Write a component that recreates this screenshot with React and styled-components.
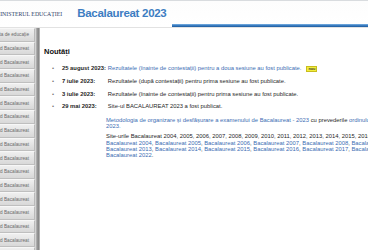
import React from "react"
import styled, { createGlobalStyle } from "styled-components"

const menu = [
  "Oferta de educație",
  "Ghid Bacalaureat",
  "Ghid Bacalaureat",
  "Ghid Bacalaureat",
  "Ghid Bacalaureat",
  "Ghid Bacalaureat",
  "Ghid Bacalaureat",
  "Ghid Bacalaureat",
  "Ghid Bacalaureat",
  "Ghid Bacalaureat",
  "Ghid Bacalaureat",
  "Ghid Bacalaureat",
  "Ghid Bacalaureat",
  "Ghid Bacalaureat",
  "Ghid Bacalaureat",
  "Ghid Bacalaureat",
  "Ghid Bacalaureat",
]

const news = [
  {
    date: "25 august 2023:",
    text: "Rezultatele (înainte de contestații) pentru a doua sesiune au fost publicate.",
    link: true,
    fresh: true,
  },
  {
    date: "7 iulie 2023:",
    text: "Rezultatele (după contestații) pentru prima sesiune au fost publicate.",
  },
  {
    date: "3 iulie 2023:",
    text: "Rezultatele (înainte de contestații) pentru prima sesiune au fost publicate.",
  },
  {
    date: "29 mai 2023:",
    text: "Site-ul BACALAUREAT 2023 a fost publicat.",
  },
]

const years = [2004, 2005, 2006, 2007, 2008, 2009, 2010, 2011, 2012, 2013, 2014, 2015, 2016, 2017, 2018, 2019, 2020, 2021, 2022]

const GlobalStyle = createGlobalStyle`
  html, body {
    margin: 0;
    padding: 0;
    background: #fff;
    overflow: hidden;
  }
  body {
    font-family: "Liberation Sans", Arial, sans-serif;
  }
`

const Page = styled.div`
  width: 640px;
  height: 250px;
  display: flex;
  flex-direction: column;
`

const Header = styled.header`
  height: 26px;
  flex: none;
  border-top: 1px solid #d9dcdf;
  display: flex;
  align-items: stretch;
  background: linear-gradient(#fdfdfd, #fff);
`

const Ministry = styled.div`
  margin-left: -5px;
  padding-top: 10px;
  font-family: "Liberation Serif", "Times New Roman", serif;
  font-size: 5.8px;
  color: #2d4168;
  white-space: nowrap;
`

const Title = styled.h1`
  margin: 0 0 0 15px;
  padding-top: 6px;
  font-size: 11.5px;
  font-weight: bold;
  letter-spacing: -0.3px;
  color: #3d7dc2;
  white-space: nowrap;
`

const Rule = styled.div`
  flex: 1;
  align-self: flex-end;
  margin-left: 6px;
  height: 3px;
  background: linear-gradient(#7db3e3, #3a7cc0 50%, #1d5a9c);
`

const Body = styled.div`
  flex: 1;
  display: flex;
  border-top: 1px solid #e2e2e2;
`

const Sidebar = styled.nav`
  width: 40px;
  flex: none;
  display: flex;
`

const Menu = styled.ul`
  margin: 0;
  padding: 0;
  list-style: none;
  width: 35px;
  background: #e4e4e4;
  overflow: hidden;
`

const MenuItem = styled.li`
  box-sizing: border-box;
  height: 13.7px;
  display: flex;
  align-items: center;
  justify-content: flex-end;
  padding-right: 5px;
  overflow: hidden;
  white-space: nowrap;
  font-size: 4.7px;
  color: #6b6b6b;
  background: linear-gradient(#efefef, #d8d8d8);
  border-top: 1px solid #f7f7f7;
  border-bottom: 1px solid #bfbfbf;
  border-right: 1px solid #b9b9b9;
`

const Bar = styled.div`
  width: 5px;
  background: linear-gradient(90deg, #e6e6e6, #9a9a9a 40%, #8a8a8a 70%, #c4c4c4);
`

const Main = styled.main`
  flex: 1;
  padding: 19px 0 0 4px;
  font-size: 5.85px;
  color: #1f1f1f;
`

const Heading = styled.h2`
  margin: 0 0 9px;
  font-size: 7.5px;
  font-weight: bold;
  color: #111;
`

const NewsList = styled.ul`
  margin: 0;
  padding: 0;
  list-style: none;
  display: grid;
  grid-template-columns: 17px auto 1fr;
  column-gap: 1px;
  row-gap: 6.3px;
`

const Row = styled.li`
  display: contents;
`

const Bullet = styled.span`
  padding-left: 8px;
  color: #777;
`

const Date = styled.span`
  font-weight: bold;
  white-space: nowrap;
  padding-right: 1px;
`

const Text = styled.span`
  white-space: nowrap;
  color: ${p => (p.$link ? "#3c6db3" : "#1f1f1f")};
`

const Badge = styled.span`
  display: inline-block;
  margin-left: 5px;
  padding: 0 1px;
  font-size: 3.8px;
  font-weight: bold;
  line-height: 4.5px;
  color: #333;
  background: #f3ef3c;
  border: 0.5px solid #c9bd1e;
  vertical-align: 0.5px;
`

const Block = styled.p`
  margin: ${p => p.$top}px 0 0 62px;
  width: 470px;
  line-height: 6.2px;
`

const Link = styled.a`
  color: #3c6db3;
  text-decoration: none;
`

export default function App() {
  return (
    <Page>
      <GlobalStyle />
      <Header>
        <Ministry>MINISTERUL EDUCAȚIEI</Ministry>
        <Title>Bacalaureat 2023</Title>
        <Rule />
      </Header>
      <Body>
        <Sidebar>
          <Menu>
            {menu.map((m, i) => (
              <MenuItem key={i}>{m}</MenuItem>
            ))}
          </Menu>
          <Bar />
        </Sidebar>
        <Main>
          <Heading>Noutăți</Heading>
          <NewsList>
            {news.map(n => (
              <Row key={n.date}>
                <Bullet>•</Bullet>
                <Date>{n.date}</Date>
                <Text $link={n.link}>
                  {n.text}
                  {n.fresh && <Badge>nou</Badge>}
                </Text>
              </Row>
            ))}
          </NewsList>
          <Block $top={8}>
            <Link href="#">
              Metodologia de organizare și desfășurare a examenului de Bacalaureat - 2023
            </Link>{" "}
            cu prevederile <Link href="#">ordinului nr. 5242/2022, actualizată</Link>
            <br />
            <Link href="#">2023.</Link>
          </Block>
          <Block $top={4}>
            Site-urile Bacalaureat {years.join(", ")}:
            <br />
            {years.map((y, i) => (
              <React.Fragment key={y}>
                <Link href="#">Bacalaureat {y}</Link>
                {i < years.length - 1 ? ", " : "."}
              </React.Fragment>
            ))}
          </Block>
        </Main>
      </Body>
    </Page>
  )
}
